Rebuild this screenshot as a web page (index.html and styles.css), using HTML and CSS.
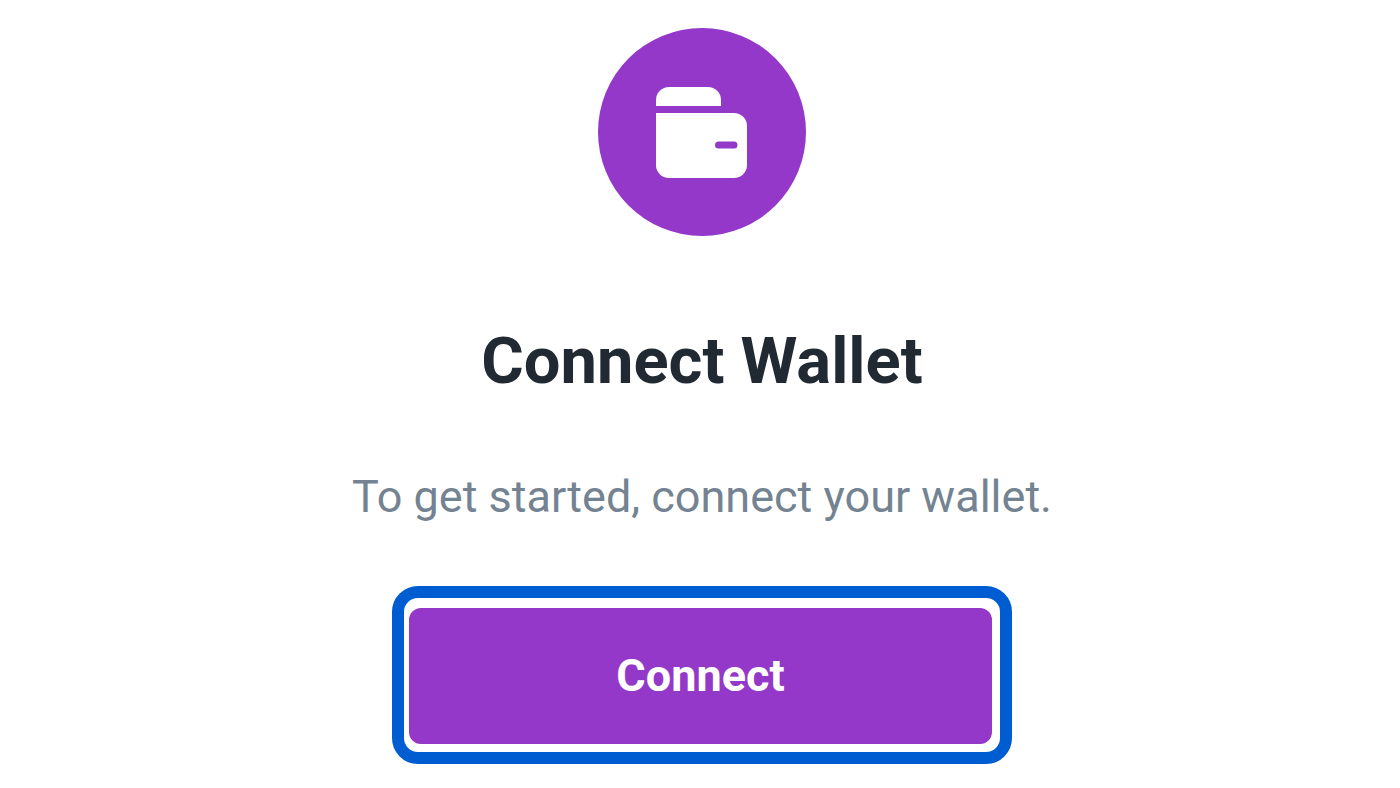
FILE: index.html
```
<!DOCTYPE html>
<html lang="en">
<head>
<meta charset="utf-8">
<meta name="viewport" content="width=device-width, initial-scale=1">
<title>Connect Wallet</title>
<link rel="stylesheet" href="styles.css">
</head>
<body>
<main class="connect">
  <svg class="badge" viewBox="0 0 208 208" aria-hidden="true">
    <circle cx="104" cy="104" r="104" fill="#9338c8"/>
    <path fill="#fff" d="M58 78V72a13 13 0 0 1 13-13H110a13 13 0 0 1 13 13V78Z"/>
    <path fill="#fff" d="M58 85H136a13 13 0 0 1 13 13V137a13 13 0 0 1-13 13H71a13 13 0 0 1-13-13Z"/>
    <rect x="117" y="113.500" width="22.500" height="7" rx="3.500" fill="#9338c8"/>
  </svg>
  <h1 class="title">Connect Wallet</h1>
  <p class="lead">To get started, connect your wallet.</p>
  <div class="highlight"><button class="action" type="button">Connect</button></div>
</main>
</body>
</html>
```
FILE: styles.css
```
* {
  box-sizing: border-box;
}

body {
  margin: 0;
  background: #fff;
  font-family: Roboto, "Liberation Sans", sans-serif;
}

.connect {
  display: flex;
  flex-direction: column;
  align-items: center;
  padding: 28px 16px 24px 20px;
  text-align: center;
}

.badge {
  width: 208px;
  height: 208px;
}

.title {
  margin: 85px 0 0;
  color: #212932;
  font-size: 65px;
  font-weight: 700;
  line-height: 80px;
}

.lead {
  margin: 68px 0 0;
  color: #748391;
  font-size: 45px;
  line-height: 56px;
}

.highlight {
  width: 100%;
  max-width: 620px;
  margin-top: 61px;
  padding: 10px 8px 8px 5px;
  border: 12px solid #005dd1;
  border-radius: 26px;
}

.action {
  display: block;
  width: 100%;
  padding: 40px 16px;
  border: 0;
  border-radius: 12px;
  background: #9338c8;
  color: #fff;
  font: inherit;
  font-size: 45px;
  font-weight: 700;
  line-height: 56px;
  cursor: pointer;
}
```
